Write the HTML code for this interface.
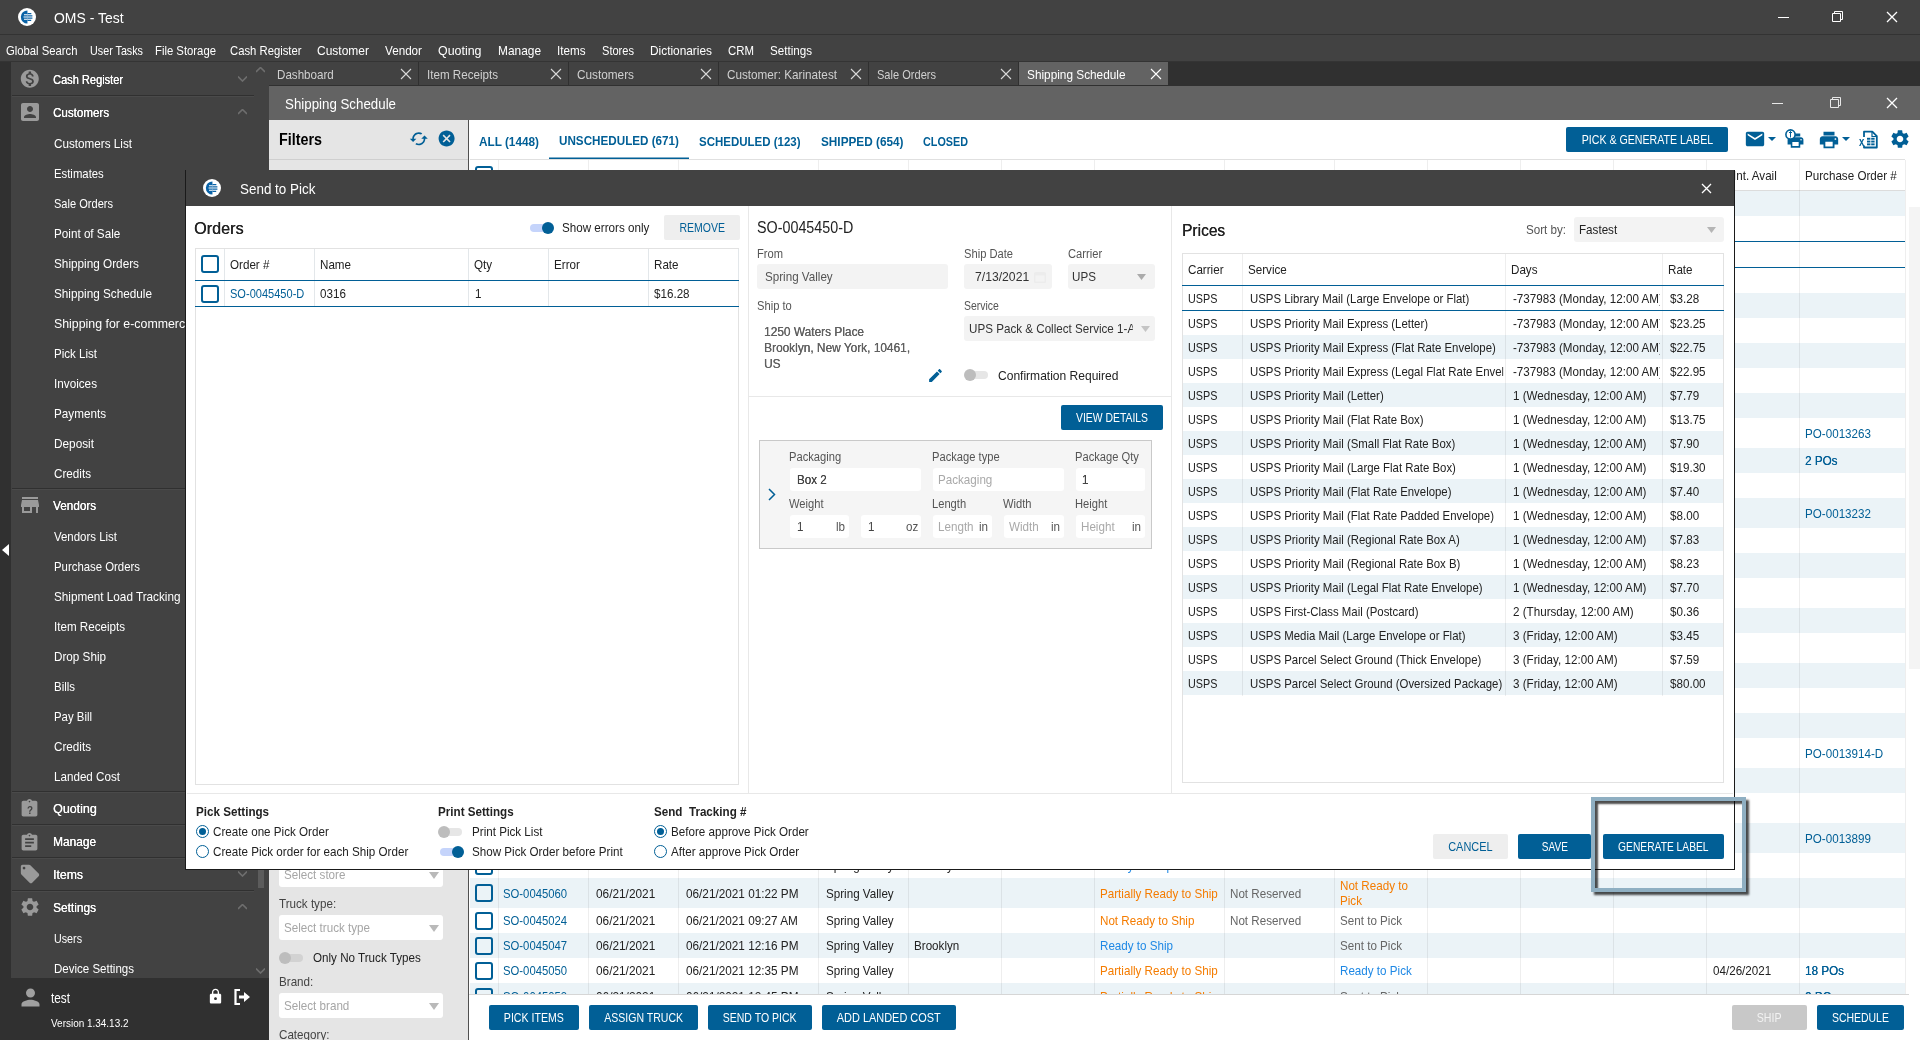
<!DOCTYPE html>
<html lang="en"><head><meta charset="utf-8"><title>OMS - Test</title>
<style>
html,body{margin:0;padding:0}
body{width:1920px;height:1040px;position:relative;overflow:hidden;background:#fff;font-family:"Liberation Sans",sans-serif;font-size:13px;color:#222}
.a,.t,.b{position:absolute;box-sizing:content-box}
.t{white-space:nowrap;transform:scaleX(.895);transform-origin:0 50%}
.b{text-align:center;white-space:nowrap;border-radius:2px}
.b span{display:inline-block;transform:scaleX(.825)}
.clip{overflow:hidden}
#r{position:absolute;left:0;top:0;width:1920px;height:1040px;will-change:transform}
</style></head><body><div id="r">

<div class="a" style="left:0px;top:0px;width:1920px;height:62px;background:#424242"></div>
<div class="a" style="left:0px;top:34px;width:1920px;height:1px;background:#333"></div>
<svg class="a" style="left:18px;top:8px" width="18" height="18" viewBox="0 0 24 24"><circle cx="12" cy="12" r="12" fill="#fff"/><path d="M12.6 3.2a8.8 8.8 0 1 0 0 17.6V3.2z" fill="#0a63a7"/><path d="M12.6 7.4h5.2M12.6 10.4h6.6M12.6 13.4h6.6M12.6 16.4h5" stroke="#0a63a7" stroke-width="1.6" fill="none"/><path d="M8 9h4.6M7.4 12h5.2M8 15h4.6" stroke="#fff" stroke-width="1.4" fill="none"/></svg>
<div class="t" style="left:54px;top:7px;font-size:15px;line-height:21px;color:#fff;transform:scaleX(0.93);">OMS - Test</div>
<div class="a" style="left:1778px;top:17px;width:11px;height:1px;background:#fff"></div>
<svg class="a" style="left:1832px;top:11px" width="12" height="12" viewBox="0 0 12 12"><path d="M0.5 2.5h8v8h-8zM2.5 2.5v-2h8v8h-2" stroke="#fff" stroke-width="1" fill="none"/></svg>
<svg class="a" style="left:1886px;top:11px" width="12" height="12"><path d="M1 1L11 11M11 1L1 11" stroke="#fff" stroke-width="1.3" fill="none"/></svg>
<div class="t" style="left:6px;top:41px;font-size:13px;line-height:19px;color:#fff;transform:scaleX(0.8678);">Global Search</div>
<div class="t" style="left:90px;top:41px;font-size:13px;line-height:19px;color:#fff;transform:scaleX(0.8273);">User Tasks</div>
<div class="t" style="left:155px;top:41px;font-size:13px;line-height:19px;color:#fff;transform:scaleX(0.8703);">File Storage</div>
<div class="t" style="left:230px;top:41px;font-size:13px;line-height:19px;color:#fff;transform:scaleX(0.868);">Cash Register</div>
<div class="t" style="left:317px;top:41px;font-size:13px;line-height:19px;color:#fff;transform:scaleX(0.9227);">Customer</div>
<div class="t" style="left:385px;top:41px;font-size:13px;line-height:19px;color:#fff;transform:scaleX(0.898);">Vendor</div>
<div class="t" style="left:438px;top:41px;font-size:13px;line-height:19px;color:#fff;transform:scaleX(0.9551);">Quoting</div>
<div class="t" style="left:498px;top:41px;font-size:13px;line-height:19px;color:#fff;transform:scaleX(0.9152);">Manage</div>
<div class="t" style="left:557px;top:41px;font-size:13px;line-height:19px;color:#fff;transform:scaleX(0.8963);">Items</div>
<div class="t" style="left:602px;top:41px;font-size:13px;line-height:19px;color:#fff;transform:scaleX(0.8516);">Stores</div>
<div class="t" style="left:650px;top:41px;font-size:13px;line-height:19px;color:#fff;transform:scaleX(0.9128);">Dictionaries</div>
<div class="t" style="left:728px;top:41px;font-size:13px;line-height:19px;color:#fff;transform:scaleX(0.8781);">CRM</div>
<div class="t" style="left:770px;top:41px;font-size:13px;line-height:19px;color:#fff;transform:scaleX(0.8939);">Settings</div>
<div class="a" style="left:0px;top:61px;width:1920px;height:1px;background:#343434"></div>
<div class="a" style="left:0px;top:62px;width:1920px;height:24px;background:#303030"></div>
<div class="a" style="left:269px;top:62px;width:149px;height:23px;background:#424242"></div>
<div class="t" style="left:277px;top:65px;font-size:13px;line-height:19px;color:#d0d0d0;transform:scaleX(0.8922);">Dashboard</div>
<svg class="a" style="left:400px;top:68px" width="12" height="12"><path d="M1 1L11 11M11 1L1 11" stroke="#d8d8d8" stroke-width="1.1" fill="none"/></svg>
<div class="a" style="left:419px;top:62px;width:149px;height:23px;background:#424242"></div>
<div class="t" style="left:427px;top:65px;font-size:13px;line-height:19px;color:#d0d0d0;transform:scaleX(0.8933);">Item Receipts</div>
<svg class="a" style="left:550px;top:68px" width="12" height="12"><path d="M1 1L11 11M11 1L1 11" stroke="#d8d8d8" stroke-width="1.1" fill="none"/></svg>
<div class="a" style="left:569px;top:62px;width:149px;height:23px;background:#424242"></div>
<div class="t" style="left:577px;top:65px;font-size:13px;line-height:19px;color:#d0d0d0;transform:scaleX(0.9068);">Customers</div>
<svg class="a" style="left:700px;top:68px" width="12" height="12"><path d="M1 1L11 11M11 1L1 11" stroke="#d8d8d8" stroke-width="1.1" fill="none"/></svg>
<div class="a" style="left:719px;top:62px;width:149px;height:23px;background:#424242"></div>
<div class="t" style="left:727px;top:65px;font-size:13px;line-height:19px;color:#d0d0d0;transform:scaleX(0.9008);">Customer: Karinatest</div>
<svg class="a" style="left:850px;top:68px" width="12" height="12"><path d="M1 1L11 11M11 1L1 11" stroke="#d8d8d8" stroke-width="1.1" fill="none"/></svg>
<div class="a" style="left:869px;top:62px;width:149px;height:23px;background:#424242"></div>
<div class="t" style="left:877px;top:65px;font-size:13px;line-height:19px;color:#d0d0d0;transform:scaleX(0.8505);">Sale Orders</div>
<svg class="a" style="left:1000px;top:68px" width="12" height="12"><path d="M1 1L11 11M11 1L1 11" stroke="#d8d8d8" stroke-width="1.1" fill="none"/></svg>
<div class="a" style="left:1019px;top:62px;width:149px;height:23px;background:#636363"></div>
<div class="t" style="left:1027px;top:65px;font-size:13px;line-height:19px;color:#fff;transform:scaleX(0.9085);">Shipping Schedule</div>
<svg class="a" style="left:1150px;top:68px" width="12" height="12"><path d="M1 1L11 11M11 1L1 11" stroke="#fff" stroke-width="1.1" fill="none"/></svg>
<div class="a" style="left:0px;top:62px;width:11px;height:978px;background:#303030"></div>
<svg class="a" style="left:2px;top:544px" width="7" height="12"><path d="M7 0v12L0 6z" fill="#fff"/></svg>
<div class="a" style="left:11px;top:62px;width:258px;height:916px;background:#424242"></div>
<div class="a" style="left:11px;top:978px;width:258px;height:62px;background:#303030"></div>
<svg class="a" style="left:18.7px;top:68.2px" width="21.6" height="21.6" viewBox="0 0 24 24"><path d="M12 2C6.48 2 2 6.48 2 12s4.48 10 10 10 10-4.48 10-10S17.52 2 12 2zm1.41 16.09V20h-2.67v-1.93c-1.71-.36-3.16-1.46-3.27-3.4h1.96c.1 1.05.82 1.87 2.65 1.87 1.96 0 2.4-.98 2.4-1.59 0-.83-.44-1.61-2.67-2.14-2.48-.6-4.18-1.62-4.18-3.67 0-1.72 1.39-2.84 3.11-3.21V4h2.67v1.95c1.86.45 2.79 1.86 2.85 3.39H14.3c-.05-1.11-.64-1.87-2.22-1.87-1.5 0-2.4.68-2.4 1.64 0 .84.65 1.39 2.67 1.91s4.18 1.39 4.18 3.91c-.01 1.83-1.38 2.83-3.12 3.16z" fill="#9a9a9a" /></svg>
<div class="t" style="left:53px;top:69.5px;font-size:13px;line-height:19px;color:#fff;transform:scaleX(0.8498);text-shadow:0.2px 0 0 #fff">Cash Register</div>
<svg class="a" style="left:238.0px;top:76px" width="9" height="6"><path d="M0 0.5L4.5 5L9 0.5" stroke="#6e6e6e" stroke-width="1.6" fill="none"/></svg>
<div class="a" style="left:12px;top:95px;width:242px;height:1px;background:#303030"></div>
<div class="a" style="left:12px;top:96px;width:242px;height:1px;background:#4a4a4a"></div>
<svg class="a" style="left:17.5px;top:100.0px" width="24" height="24" viewBox="0 0 24 24"><path d="M3 5v14c0 1.1.89 2 2 2h14c1.1 0 2-.9 2-2V5c0-1.1-.9-2-2-2H5c-1.11 0-2 .9-2 2zm12 4c0 1.66-1.34 3-3 3s-3-1.34-3-3 1.34-3 3-3 3 1.34 3 3zm-9 8c0-2 4-3.1 6-3.1s6 1.1 6 3.1v1H6v-1z" fill="#9a9a9a" /></svg>
<div class="t" style="left:53px;top:102.5px;font-size:13px;line-height:19px;color:#fff;transform:scaleX(0.8909);text-shadow:0.2px 0 0 #fff">Customers</div>
<svg class="a" style="left:238.0px;top:109px" width="9" height="6"><path d="M0 5L4.5 0.5L9 5" stroke="#6e6e6e" stroke-width="1.6" fill="none"/></svg>
<div class="t" style="left:54px;top:134px;font-size:13px;line-height:19px;color:#fff;transform:scaleX(0.8996);">Customers List</div>
<div class="t" style="left:54px;top:164px;font-size:13px;line-height:19px;color:#fff;transform:scaleX(0.8716);">Estimates</div>
<div class="t" style="left:54px;top:194px;font-size:13px;line-height:19px;color:#fff;transform:scaleX(0.8505);">Sale Orders</div>
<div class="t" style="left:54px;top:224px;font-size:13px;line-height:19px;color:#fff;transform:scaleX(0.8987);">Point of Sale</div>
<div class="t" style="left:54px;top:254px;font-size:13px;line-height:19px;color:#fff;transform:scaleX(0.9047);">Shipping Orders</div>
<div class="t" style="left:54px;top:284px;font-size:13px;line-height:19px;color:#fff;transform:scaleX(0.9039);">Shipping Schedule</div>
<div class="t" style="left:54px;top:314px;font-size:13px;line-height:19px;color:#fff;transform:scaleX(0.9502);">Shipping for e-commerce</div>
<div class="t" style="left:54px;top:344px;font-size:13px;line-height:19px;color:#fff;transform:scaleX(0.8883);">Pick List</div>
<div class="t" style="left:54px;top:374px;font-size:13px;line-height:19px;color:#fff;transform:scaleX(0.9014);">Invoices</div>
<div class="t" style="left:54px;top:404px;font-size:13px;line-height:19px;color:#fff;transform:scaleX(0.8995);">Payments</div>
<div class="t" style="left:54px;top:434px;font-size:13px;line-height:19px;color:#fff;transform:scaleX(0.9075);">Deposit</div>
<div class="t" style="left:54px;top:464px;font-size:13px;line-height:19px;color:#fff;transform:scaleX(0.8983);">Credits</div>
<div class="a" style="left:12px;top:488px;width:242px;height:1px;background:#303030"></div>
<div class="a" style="left:12px;top:489px;width:242px;height:1px;background:#4a4a4a"></div>
<svg class="a" style="left:17.5px;top:493.0px" width="24" height="24" viewBox="0 0 24 24"><path d="M20 4H4v2h16V4zm1 10v-2l-1-5H4l-1 5v2h1v6h10v-6h4v6h2v-6h1zm-9 4H6v-4h6v4z" fill="#9a9a9a" /></svg>
<div class="t" style="left:53px;top:495.5px;font-size:13px;line-height:19px;color:#fff;transform:scaleX(0.9014);text-shadow:0.2px 0 0 #fff">Vendors</div>
<div class="t" style="left:54px;top:527px;font-size:13px;line-height:19px;color:#fff;transform:scaleX(0.8805);">Vendors List</div>
<div class="t" style="left:54px;top:557px;font-size:13px;line-height:19px;color:#fff;transform:scaleX(0.8752);">Purchase Orders</div>
<div class="t" style="left:54px;top:587px;font-size:13px;line-height:19px;color:#fff;transform:scaleX(0.9023);">Shipment Load Tracking</div>
<div class="t" style="left:54px;top:617px;font-size:13px;line-height:19px;color:#fff;transform:scaleX(0.8933);">Item Receipts</div>
<div class="t" style="left:54px;top:647px;font-size:13px;line-height:19px;color:#fff;transform:scaleX(0.8995);">Drop Ship</div>
<div class="t" style="left:54px;top:677px;font-size:13px;line-height:19px;color:#fff;transform:scaleX(0.8807);">Bills</div>
<div class="t" style="left:54px;top:707px;font-size:13px;line-height:19px;color:#fff;transform:scaleX(0.8764);">Pay Bill</div>
<div class="t" style="left:54px;top:737px;font-size:13px;line-height:19px;color:#fff;transform:scaleX(0.8983);">Credits</div>
<div class="t" style="left:54px;top:767px;font-size:13px;line-height:19px;color:#fff;transform:scaleX(0.8951);">Landed Cost</div>
<div class="a" style="left:12px;top:791px;width:242px;height:1px;background:#303030"></div>
<div class="a" style="left:12px;top:792px;width:242px;height:1px;background:#4a4a4a"></div>
<svg class="a" style="left:19px;top:798px" width="21" height="21" viewBox="0 0 24 24"><path d="M19 3h-4.18C14.4 1.84 13.3 1 12 1c-1.3 0-2.4.84-2.82 2H5c-1.1 0-2 .9-2 2v14c0 1.1.9 2 2 2h14c1.1 0 2-.9 2-2V5c0-1.1-.9-2-2-2zm-7 0c.55 0 1 .45 1 1s-.45 1-1 1-1-.45-1-1 .45-1 1-1z" fill="#9a9a9a" /></svg>
<div class="t" style="left:26.5px;top:801.5px;font-size:11px;line-height:17px;color:#424242;font-weight:700;">?</div>
<div class="t" style="left:53px;top:798.5px;font-size:13px;line-height:19px;color:#fff;transform:scaleX(0.9605);text-shadow:0.2px 0 0 #fff">Quoting</div>
<div class="a" style="left:12px;top:824px;width:242px;height:1px;background:#303030"></div>
<div class="a" style="left:12px;top:825px;width:242px;height:1px;background:#4a4a4a"></div>
<svg class="a" style="left:19.0px;top:831.5px" width="21" height="21" viewBox="0 0 24 24"><path d="M19 3h-4.18C14.4 1.84 13.3 1 12 1c-1.3 0-2.4.84-2.82 2H5c-1.1 0-2 .9-2 2v14c0 1.1.9 2 2 2h14c1.1 0 2-.9 2-2V5c0-1.1-.9-2-2-2zm-7 0c.55 0 1 .45 1 1s-.45 1-1 1-1-.45-1-1 .45-1 1-1zm2 14H7v-2h7v2zm3-4H7v-2h10v2zm0-4H7V7h10v2z" fill="#9a9a9a" /></svg>
<div class="t" style="left:53px;top:831.5px;font-size:13px;line-height:19px;color:#fff;transform:scaleX(0.9152);text-shadow:0.2px 0 0 #fff">Manage</div>
<div class="a" style="left:12px;top:857px;width:242px;height:1px;background:#303030"></div>
<div class="a" style="left:12px;top:858px;width:242px;height:1px;background:#4a4a4a"></div>
<svg class="a" style="left:18.5px;top:863.0px" width="22" height="22" viewBox="0 0 24 24"><path d="M21.41 11.58l-9-9C12.05 2.22 11.55 2 11 2H4c-1.1 0-2 .9-2 2v7c0 .55.22 1.05.59 1.42l9 9c.36.36.86.58 1.41.58.55 0 1.05-.22 1.41-.59l7-7c.37-.36.59-.86.59-1.41 0-.55-.23-1.06-.59-1.42zM5.5 7C4.67 7 4 6.33 4 5.5S4.67 4 5.5 4 7 4.67 7 5.5 6.33 7 5.5 7z" fill="#9a9a9a" /></svg>
<div class="t" style="left:53px;top:864.5px;font-size:13px;line-height:19px;color:#fff;transform:scaleX(0.9435);text-shadow:0.2px 0 0 #fff">Items</div>
<svg class="a" style="left:238.0px;top:871px" width="9" height="6"><path d="M0 0.5L4.5 5L9 0.5" stroke="#6e6e6e" stroke-width="1.6" fill="none"/></svg>
<div class="a" style="left:12px;top:890px;width:242px;height:1px;background:#303030"></div>
<div class="a" style="left:12px;top:891px;width:242px;height:1px;background:#4a4a4a"></div>
<svg class="a" style="left:18.5px;top:896.0px" width="22" height="22" viewBox="0 0 24 24"><path d="M19.14 12.94c.04-.3.06-.61.06-.94 0-.32-.02-.64-.07-.94l2.03-1.58c.18-.14.23-.41.12-.61l-1.92-3.32c-.12-.22-.37-.29-.59-.22l-2.39.96c-.5-.38-1.03-.7-1.62-.94l-.36-2.54c-.04-.24-.24-.41-.48-.41h-3.84c-.24 0-.43.17-.47.41l-.36 2.54c-.59.24-1.13.57-1.62.94l-2.39-.96c-.22-.08-.47 0-.59.22L2.74 8.87c-.12.21-.08.47.12.61l2.03 1.58c-.05.3-.09.63-.09.94s.02.64.07.94l-2.03 1.58c-.18.14-.23.41-.12.61l1.92 3.32c.12.22.37.29.59.22l2.39-.96c.5.38 1.03.7 1.62.94l.36 2.54c.05.24.24.41.48.41h3.84c.24 0 .44-.17.47-.41l.36-2.54c.59-.24 1.13-.56 1.62-.94l2.39.96c.22.08.47 0 .59-.22l1.92-3.32c.12-.22.07-.47-.12-.61l-2.01-1.58zM12 15.6c-1.98 0-3.6-1.62-3.6-3.6s1.62-3.6 3.6-3.6 3.6 1.62 3.6 3.6-1.62 3.6-3.6 3.6z" fill="#9a9a9a" /></svg>
<div class="t" style="left:53px;top:897.5px;font-size:13px;line-height:19px;color:#fff;transform:scaleX(0.9152);text-shadow:0.2px 0 0 #fff">Settings</div>
<svg class="a" style="left:238.0px;top:904px" width="9" height="6"><path d="M0 5L4.5 0.5L9 5" stroke="#6e6e6e" stroke-width="1.6" fill="none"/></svg>
<div class="t" style="left:54px;top:929px;font-size:13px;line-height:19px;color:#fff;transform:scaleX(0.8247);">Users</div>
<div class="t" style="left:54px;top:959px;font-size:13px;line-height:19px;color:#fff;transform:scaleX(0.8857);">Device Settings</div>
<svg class="a" style="left:256.0px;top:67px" width="9" height="6"><path d="M0 5L4.5 0.5L9 5" stroke="#6e6e6e" stroke-width="1.6" fill="none"/></svg>
<svg class="a" style="left:256.0px;top:968px" width="9" height="6"><path d="M0 0.5L4.5 5L9 0.5" stroke="#6e6e6e" stroke-width="1.6" fill="none"/></svg>
<div class="a" style="left:258px;top:800px;width:6px;height:88px;background:#5c5c5c"></div>
<svg class="a" style="left:16.5px;top:983.5px" width="27" height="27" viewBox="0 0 24 24"><path d="M12 12c2.21 0 4-1.79 4-4s-1.79-4-4-4-4 1.79-4 4 1.79 4 4 4zm0 2c-2.67 0-8 1.34-8 4v2h16v-2c0-2.66-5.33-4-8-4z" fill="#a0a0a0" /></svg>
<div class="t" style="left:51px;top:987.5px;font-size:14px;line-height:20px;color:#fff;transform:scaleX(0.8415);">test</div>
<svg class="a" style="left:207px;top:988px" width="17" height="17" viewBox="0 0 24 24"><path d="M18 8h-1V6c0-2.76-2.24-5-5-5S7 3.24 7 6v2H6c-1.1 0-2 .9-2 2v10c0 1.1.9 2 2 2h12c1.1 0 2-.9 2-2V10c0-1.1-.9-2-2-2zm-6 9c-1.1 0-2-.9-2-2s.9-2 2-2 2 .9 2 2-.9 2-2 2zm3.1-9H8.9V6c0-1.71 1.39-3.1 3.1-3.1 1.71 0 3.1 1.39 3.1 3.1v2z" fill="#fff" /></svg>
<svg class="a" style="left:233px;top:988px" width="18" height="18" viewBox="0 0 18 18"><path d="M7 2H2.5v14H7" stroke="#fff" stroke-width="2.2" fill="none"/><path d="M6 7.5h5V4l6 5-6 5v-3.500H6z" fill="#fff"/></svg>
<div class="t" style="left:51px;top:1015px;font-size:11px;line-height:17px;color:#fff;transform:scaleX(0.9051);">Version 1.34.13.2</div>
<div class="a" style="left:269px;top:86px;width:1651px;height:34px;background:#636363"></div>
<div class="t" style="left:285px;top:92.5px;font-size:15px;line-height:21px;color:#fff;transform:scaleX(0.8872);">Shipping Schedule</div>
<div class="a" style="left:1772px;top:103px;width:11px;height:1px;background:#e8e8e8"></div>
<svg class="a" style="left:1830px;top:97px" width="12" height="12" viewBox="0 0 12 12"><path d="M0.5 2.500h8v8h-8zM2.5 2.500v-2h8v8h-2" stroke="#e8e8e8" stroke-width="1" fill="none"/></svg>
<svg class="a" style="left:1886px;top:97px" width="12" height="12"><path d="M1 1L11 11M11 1L1 11" stroke="#fff" stroke-width="1.3" fill="none"/></svg>
<div class="a" style="left:269px;top:120px;width:199px;height:920px;background:#e5e5e5"></div>
<div class="a" style="left:468px;top:120px;width:1px;height:920px;background:#505050"></div>
<div class="a" style="left:269px;top:159px;width:199px;height:1px;background:#cfcfcf"></div>
<div class="t" style="left:279px;top:129px;font-size:16px;line-height:22px;color:#000;font-weight:700;">Filters</div>
<svg class="a" style="left:409.2px;top:129.2px" width="19.6" height="19.6" viewBox="0 0 24 24"><path d="M19 8l-4 4h3c0 3.31-2.69 6-6 6-1.01 0-1.97-.25-2.8-.7l-1.46 1.46C8.97 19.54 10.43 20 12 20c4.42 0 8-3.58 8-8h3l-4-4zM6 12c0-3.31 2.69-6 6-6 1.01 0 1.97.25 2.8.7l1.46-1.46C15.03 4.46 13.57 4 12 4c-4.42 0-8 3.58-8 8H1l4 4 4-4H6z" fill="#015f96" /></svg>
<svg class="a" style="left:437.4px;top:129.4px" width="19.2" height="19.2" viewBox="0 0 24 24"><path d="M12 2C6.47 2 2 6.47 2 12s4.47 10 10 10 10-4.47 10-10S17.53 2 12 2zm5 13.59L15.59 17 12 13.41 8.41 17 7 15.59 10.59 12 7 8.41 8.41 7 12 10.59 15.59 7 17 8.41 13.41 12 17 15.59z" fill="#015f96" /></svg>
<div class="a" style="left:279px;top:862px;width:164px;height:25px;background:#fff;border-radius:3px"></div>
<div class="t" style="left:284px;top:865px;font-size:13px;line-height:19px;color:#a6a6a6;">Select store</div>
<svg class="a" style="left:429px;top:872px" width="10" height="7"><path d="M0 0H10L5.0 7z" fill="#b9b9b9"/></svg>
<div class="t" style="left:279px;top:893.7px;font-size:13px;line-height:19px;color:#444;">Truck type:</div>
<div class="a" style="left:279px;top:915px;width:164px;height:25px;background:#fff;border-radius:3px"></div>
<div class="t" style="left:284px;top:918px;font-size:13px;line-height:19px;color:#a6a6a6;">Select truck type</div>
<svg class="a" style="left:429px;top:925px" width="10" height="7"><path d="M0 0H10L5.0 7z" fill="#b9b9b9"/></svg>
<div class="a" style="left:281px;top:954px;width:22px;height:8px;background:#d2d2d2;border-radius:4px"></div>
<div class="a" style="left:279px;top:952px;width:12px;height:12px;background:#bdbdbd;border-radius:6px"></div>
<div class="t" style="left:313px;top:947.7px;font-size:13px;line-height:19px;color:#222;">Only No Truck Types</div>
<div class="t" style="left:279px;top:971.7px;font-size:13px;line-height:19px;color:#444;">Brand:</div>
<div class="a" style="left:279px;top:993px;width:164px;height:25px;background:#fff;border-radius:3px"></div>
<div class="t" style="left:284px;top:996px;font-size:13px;line-height:19px;color:#a6a6a6;">Select brand</div>
<svg class="a" style="left:429px;top:1003px" width="10" height="7"><path d="M0 0H10L5.0 7z" fill="#b9b9b9"/></svg>
<div class="t" style="left:279px;top:1024.7px;font-size:13px;line-height:19px;color:#444;">Category:</div>
<div class="a" style="left:469px;top:120px;width:1451px;height:920px;background:#fff"></div>
<div class="t" style="left:479px;top:132px;font-size:13px;line-height:19px;color:#015f96;font-weight:700;transform:scaleX(0.9059);">ALL (1448)</div>
<div class="t" style="left:559px;top:131px;font-size:13px;line-height:19px;color:#015f96;font-weight:700;transform:scaleX(0.8979);">UNSCHEDULED (671)</div>
<div class="t" style="left:699px;top:132px;font-size:13px;line-height:19px;color:#015f96;font-weight:700;transform:scaleX(0.8837);">SCHEDULED (123)</div>
<div class="t" style="left:820.5px;top:132px;font-size:13px;line-height:19px;color:#015f96;font-weight:700;transform:scaleX(0.9061);">SHIPPED (654)</div>
<div class="t" style="left:923px;top:132px;font-size:13px;line-height:19px;color:#015f96;font-weight:700;transform:scaleX(0.8307);">CLOSED</div>
<div class="a" style="left:549px;top:158px;width:140px;height:2px;background:#015f96"></div>
<div class="a" style="left:549px;top:157px;width:140px;height:1px;background:rgba(1,95,150,.5)"></div>
<div class="a b" style="left:1566px;top:127px;width:162px;height:25px;line-height:25px;font-size:13px;background:#015f96;color:#fff;"><span style="transform:scaleX(0.8174)">PICK &amp; GENERATE LABEL</span></div>
<svg class="a" style="left:1744px;top:128px" width="22" height="22" viewBox="0 0 24 24"><path d="M20 4H4c-1.1 0-1.99.9-1.99 2L2 18c0 1.1.9 2 2 2h16c1.1 0 2-.9 2-2V6c0-1.1-.9-2-2-2zm0 4l-8 5-8-5V6l8 5 8-5v2z" fill="#015f96" /></svg>
<svg class="a" style="left:1768px;top:137px" width="8" height="4"><path d="M0 0H8L4.0 4z" fill="#015f96"/></svg>
<svg class="a" style="left:1785.8px;top:131px" width="19" height="19" viewBox="0 0 24 24"><path d="M19 8H5c-1.66 0-3 1.34-3 3v6h4v4h12v-4h4v-6c0-1.66-1.34-3-3-3zm-3 11H8v-5h8v5zm3-7c-.55 0-1-.45-1-1s.45-1 1-1 1 .45 1 1-.45 1-1 1zm-1-9H6v4h12V3z" fill="#015f96" /></svg>
<svg class="a" style="left:1784.5px;top:128.5px" width="11" height="11" viewBox="0 0 11 11"><circle cx="5.5" cy="5.5" r="4.6" fill="#fff" stroke="#015f96" stroke-width="1.6"/><path d="M5.5 2.5v6M4 4l1.500-1.500L7 4" stroke="#015f96" stroke-width="1" fill="none"/></svg>
<svg class="a" style="left:1818px;top:129px" width="22" height="22" viewBox="0 0 24 24"><path d="M19 8H5c-1.66 0-3 1.34-3 3v6h4v4h12v-4h4v-6c0-1.66-1.34-3-3-3zm-3 11H8v-5h8v5zm3-7c-.55 0-1-.45-1-1s.45-1 1-1 1 .45 1 1-.45 1-1 1zm-1-9H6v4h12V3z" fill="#015f96" /></svg>
<svg class="a" style="left:1842px;top:137px" width="8" height="4"><path d="M0 0H8L4.0 4z" fill="#015f96"/></svg>
<svg class="a" style="left:1858px;top:130px" width="20" height="19" viewBox="0 0 20 19"><path d="M6 1.700h8.300l4.500 4.500v11.300H6z" fill="#fff" stroke="#015f96" stroke-width="1.800" stroke-linejoin="round"/><path d="M14 1.700v4.800h4.800" fill="none" stroke="#015f96" stroke-width="1.200"/><rect x="0" y="7" width="7.600" height="8.500" fill="#fff"/><rect x="9" y="7.8" width="3.400" height="1.900" fill="#015f96"/><rect x="13.2" y="7.8" width="3.400" height="1.900" fill="#015f96"/><rect x="9" y="10.6" width="3.400" height="1.900" fill="#015f96"/><rect x="13.2" y="10.6" width="3.400" height="1.900" fill="#015f96"/><rect x="9" y="13.4" width="3.400" height="1.900" fill="#015f96"/><rect x="13.2" y="13.4" width="3.400" height="1.900" fill="#015f96"/></svg>
<div class="t" style="left:1859px;top:132.5px;font-size:12px;line-height:18px;color:#015f96;font-weight:700;transform:scaleX(0.8);">x</div>
<svg class="a" style="left:1889px;top:128px" width="22" height="22" viewBox="0 0 24 24"><path d="M19.14 12.94c.04-.3.06-.61.06-.94 0-.32-.02-.64-.07-.94l2.03-1.58c.18-.14.23-.41.12-.61l-1.92-3.32c-.12-.22-.37-.29-.59-.22l-2.39.96c-.5-.38-1.03-.7-1.62-.94l-.36-2.54c-.04-.24-.24-.41-.48-.41h-3.84c-.24 0-.43.17-.47.41l-.36 2.54c-.59.24-1.13.57-1.62.94l-2.39-.96c-.22-.08-.47 0-.59.22L2.74 8.87c-.12.21-.08.47.12.61l2.03 1.58c-.05.3-.09.63-.09.94s.02.64.07.94l-2.03 1.58c-.18.14-.23.41-.12.61l1.92 3.32c.12.22.37.29.59.22l2.39-.96c.5.38 1.03.7 1.62.94l.36 2.54c.05.24.24.41.48.41h3.84c.24 0 .44-.17.47-.41l.36-2.54c.59-.24 1.13-.56 1.62-.94l2.39.96c.22.08.47 0 .59-.22l1.92-3.32c.12-.22.07-.47-.12-.61l-2.01-1.58zM12 15.6c-1.98 0-3.6-1.62-3.6-3.6s1.62-3.6 3.6-3.6 3.6 1.62 3.6 3.6-1.62 3.6-3.6 3.6z" fill="#015f96" /></svg>
<div class="a" style="left:470px;top:159px;width:1435px;height:1px;background:#e0e0e0"></div>
<div class="a" style="left:470px;top:190px;width:1435px;height:26px;background:#ebf3f7"></div>
<div class="a" style="left:470px;top:241px;width:1435px;height:1px;background:#015f96"></div>
<div class="a" style="left:470px;top:267px;width:1435px;height:1px;background:#015f96"></div>
<div class="a" style="left:470px;top:293px;width:1435px;height:25px;background:#ebf3f7"></div>
<div class="a" style="left:470px;top:343px;width:1435px;height:25px;background:#ebf3f7"></div>
<div class="a" style="left:470px;top:393px;width:1435px;height:25px;background:#ebf3f7"></div>
<div class="a" style="left:470px;top:448px;width:1435px;height:25px;background:#ebf3f7"></div>
<div class="a" style="left:470px;top:498px;width:1435px;height:30px;background:#ebf3f7"></div>
<div class="a" style="left:470px;top:553px;width:1435px;height:25px;background:#ebf3f7"></div>
<div class="a" style="left:470px;top:608px;width:1435px;height:25px;background:#ebf3f7"></div>
<div class="a" style="left:470px;top:663px;width:1435px;height:25px;background:#ebf3f7"></div>
<div class="a" style="left:470px;top:713px;width:1435px;height:25px;background:#ebf3f7"></div>
<div class="a" style="left:470px;top:768px;width:1435px;height:25px;background:#ebf3f7"></div>
<div class="a" style="left:470px;top:823px;width:1435px;height:30px;background:#ebf3f7"></div>
<div class="a" style="left:470px;top:878px;width:1435px;height:30px;background:#ebf3f7"></div>
<div class="a" style="left:470px;top:933px;width:1435px;height:25px;background:#ebf3f7"></div>
<div class="a" style="left:470px;top:983px;width:1435px;height:12px;background:#ebf3f7"></div>
<div class="a" style="left:470px;top:190px;width:1435px;height:1px;background:#dcdcdc"></div>
<div class="a" style="left:498px;top:160px;width:1px;height:835px;background:rgba(0,0,0,0.065)"></div>
<div class="a" style="left:588px;top:160px;width:1px;height:835px;background:rgba(0,0,0,0.065)"></div>
<div class="a" style="left:678px;top:160px;width:1px;height:835px;background:rgba(0,0,0,0.065)"></div>
<div class="a" style="left:818px;top:160px;width:1px;height:835px;background:rgba(0,0,0,0.065)"></div>
<div class="a" style="left:908px;top:160px;width:1px;height:835px;background:rgba(0,0,0,0.065)"></div>
<div class="a" style="left:1001px;top:160px;width:1px;height:835px;background:rgba(0,0,0,0.065)"></div>
<div class="a" style="left:1094px;top:160px;width:1px;height:835px;background:rgba(0,0,0,0.065)"></div>
<div class="a" style="left:1224px;top:160px;width:1px;height:835px;background:rgba(0,0,0,0.065)"></div>
<div class="a" style="left:1334px;top:160px;width:1px;height:835px;background:rgba(0,0,0,0.065)"></div>
<div class="a" style="left:1427px;top:160px;width:1px;height:835px;background:rgba(0,0,0,0.065)"></div>
<div class="a" style="left:1520px;top:160px;width:1px;height:835px;background:rgba(0,0,0,0.065)"></div>
<div class="a" style="left:1613px;top:160px;width:1px;height:835px;background:rgba(0,0,0,0.065)"></div>
<div class="a" style="left:1706px;top:160px;width:1px;height:835px;background:rgba(0,0,0,0.065)"></div>
<div class="a" style="left:1799px;top:160px;width:1px;height:835px;background:rgba(0,0,0,0.065)"></div>
<div class="a" style="left:1905px;top:160px;width:1px;height:835px;background:rgba(0,0,0,0.065)"></div>
<div class="t" style="left:1732.5px;top:166px;font-size:13px;line-height:19px;color:#222;">Int. Avail</div>
<div class="t" style="left:1805px;top:166px;font-size:13px;line-height:19px;color:#222;">Purchase Order #</div>
<div class="a" style="left:475px;top:166px;width:14px;height:14px;border:2px solid #015f96;border-radius:3px;background:transparent"></div>
<div class="t" style="left:1805px;top:424px;font-size:13px;line-height:19px;color:#015f96;">PO-0013263</div>
<div class="t" style="left:1805px;top:451px;font-size:13px;line-height:19px;color:#015f96;text-shadow:0.4px 0 0 #015f96">2 POs</div>
<div class="t" style="left:1805px;top:504px;font-size:13px;line-height:19px;color:#015f96;">PO-0013232</div>
<div class="t" style="left:1805px;top:744px;font-size:13px;line-height:19px;color:#015f96;">PO-0013914-D</div>
<div class="t" style="left:1805px;top:829px;font-size:13px;line-height:19px;color:#015f96;">PO-0013899</div>
<div class="a clip" style="left:469px;top:160px;width:1436px;height:835px">
<div class="a" style="left:6px;top:696.5px;width:14px;height:14px;border:2px solid #015f96;border-radius:3px;background:transparent"></div>
<div class="t" style="left:34px;top:696px;font-size:13px;line-height:19px;color:#015f96;transform:scaleX(0.87);">SO-0045057</div>
<div class="t" style="left:127px;top:696px;font-size:13px;line-height:19px;color:#222;transform:scaleX(0.91);">06/21/2021</div>
<div class="t" style="left:217px;top:696px;font-size:13px;line-height:19px;color:#222;transform:scaleX(0.905);">06/21/2021 01:10 PM</div>
<div class="t" style="left:357px;top:696px;font-size:13px;line-height:19px;color:#222;">Spring Valley</div>
<div class="t" style="left:445px;top:696px;font-size:13px;line-height:19px;color:#222;">Brooklyn</div>
<div class="t" style="left:631px;top:696px;font-size:13px;line-height:19px;color:#1e88e5;">Ready to Ship</div>
<div class="a" style="left:6px;top:724.0px;width:14px;height:14px;border:2px solid #015f96;border-radius:3px;background:transparent"></div>
<div class="t" style="left:34px;top:724px;font-size:13px;line-height:19px;color:#015f96;transform:scaleX(0.87);">SO-0045060</div>
<div class="t" style="left:127px;top:724px;font-size:13px;line-height:19px;color:#222;transform:scaleX(0.91);">06/21/2021</div>
<div class="t" style="left:217px;top:724px;font-size:13px;line-height:19px;color:#222;transform:scaleX(0.905);">06/21/2021 01:22 PM</div>
<div class="t" style="left:357px;top:724px;font-size:13px;line-height:19px;color:#222;">Spring Valley</div>
<div class="t" style="left:631px;top:724px;font-size:13px;line-height:19px;color:#f57c00;">Partially Ready to Ship</div>
<div class="t" style="left:761px;top:724px;font-size:13px;line-height:19px;color:#666;">Not Reserved</div>
<div class="t" style="left:871px;top:717.5px;font-size:13px;line-height:15px;color:#f57c00;">Not Ready to<br>Pick</div>
<div class="a" style="left:6px;top:751.5px;width:14px;height:14px;border:2px solid #015f96;border-radius:3px;background:transparent"></div>
<div class="t" style="left:34px;top:751px;font-size:13px;line-height:19px;color:#015f96;transform:scaleX(0.87);">SO-0045024</div>
<div class="t" style="left:127px;top:751px;font-size:13px;line-height:19px;color:#222;transform:scaleX(0.91);">06/21/2021</div>
<div class="t" style="left:217px;top:751px;font-size:13px;line-height:19px;color:#222;transform:scaleX(0.905);">06/21/2021 09:27 AM</div>
<div class="t" style="left:357px;top:751px;font-size:13px;line-height:19px;color:#222;">Spring Valley</div>
<div class="t" style="left:631px;top:751px;font-size:13px;line-height:19px;color:#f57c00;">Not Ready to Ship</div>
<div class="t" style="left:761px;top:751px;font-size:13px;line-height:19px;color:#666;">Not Reserved</div>
<div class="t" style="left:871px;top:751px;font-size:13px;line-height:19px;color:#666;">Sent to Pick</div>
<div class="a" style="left:6px;top:776.5px;width:14px;height:14px;border:2px solid #015f96;border-radius:3px;background:transparent"></div>
<div class="t" style="left:34px;top:776px;font-size:13px;line-height:19px;color:#015f96;transform:scaleX(0.87);">SO-0045047</div>
<div class="t" style="left:127px;top:776px;font-size:13px;line-height:19px;color:#222;transform:scaleX(0.91);">06/21/2021</div>
<div class="t" style="left:217px;top:776px;font-size:13px;line-height:19px;color:#222;transform:scaleX(0.905);">06/21/2021 12:16 PM</div>
<div class="t" style="left:357px;top:776px;font-size:13px;line-height:19px;color:#222;">Spring Valley</div>
<div class="t" style="left:445px;top:776px;font-size:13px;line-height:19px;color:#222;">Brooklyn</div>
<div class="t" style="left:631px;top:776px;font-size:13px;line-height:19px;color:#1e88e5;">Ready to Ship</div>
<div class="t" style="left:871px;top:776px;font-size:13px;line-height:19px;color:#666;">Sent to Pick</div>
<div class="a" style="left:6px;top:801.5px;width:14px;height:14px;border:2px solid #015f96;border-radius:3px;background:transparent"></div>
<div class="t" style="left:34px;top:801px;font-size:13px;line-height:19px;color:#015f96;transform:scaleX(0.87);">SO-0045050</div>
<div class="t" style="left:127px;top:801px;font-size:13px;line-height:19px;color:#222;transform:scaleX(0.91);">06/21/2021</div>
<div class="t" style="left:217px;top:801px;font-size:13px;line-height:19px;color:#222;transform:scaleX(0.905);">06/21/2021 12:35 PM</div>
<div class="t" style="left:357px;top:801px;font-size:13px;line-height:19px;color:#222;">Spring Valley</div>
<div class="t" style="left:631px;top:801px;font-size:13px;line-height:19px;color:#f57c00;">Partially Ready to Ship</div>
<div class="t" style="left:871px;top:801px;font-size:13px;line-height:19px;color:#1e88e5;">Ready to Pick</div>
<div class="t" style="left:1244px;top:801px;font-size:13px;line-height:19px;color:#222;">04/26/2021</div>
<div class="t" style="left:1336px;top:801px;font-size:13px;line-height:19px;color:#015f96;text-shadow:0.4px 0 0 #015f96">18 POs</div>
<div class="a" style="left:6px;top:827.5px;width:14px;height:14px;border:2px solid #015f96;border-radius:3px;background:transparent"></div>
<div class="t" style="left:34px;top:827px;font-size:13px;line-height:19px;color:#015f96;transform:scaleX(0.87);">SO-0045053</div>
<div class="t" style="left:127px;top:827px;font-size:13px;line-height:19px;color:#222;transform:scaleX(0.91);">06/21/2021</div>
<div class="t" style="left:217px;top:827px;font-size:13px;line-height:19px;color:#222;transform:scaleX(0.905);">06/21/2021 12:45 PM</div>
<div class="t" style="left:357px;top:827px;font-size:13px;line-height:19px;color:#222;">Spring Valley</div>
<div class="t" style="left:631px;top:827px;font-size:13px;line-height:19px;color:#f57c00;">Partially Ready to Ship</div>
<div class="t" style="left:871px;top:827px;font-size:13px;line-height:19px;color:#666;">Sent to Pick</div>
<div class="t" style="left:1336px;top:827px;font-size:13px;line-height:19px;color:#015f96;text-shadow:0.4px 0 0 #015f96">9 POs</div>
</div>
<div class="a" style="left:469px;top:994px;width:1451px;height:1px;background:#d6d6d6"></div>
<div class="a" style="left:1909px;top:160px;width:11px;height:835px;background:#fff"></div>
<div class="a" style="left:1909px;top:207px;width:11px;height:462px;background:#f4f4f4"></div>
<div class="a b" style="left:489px;top:1005px;width:90px;height:25px;line-height:25px;font-size:13px;background:#015f96;color:#fff;"><span style="transform:scaleX(0.8142)">PICK ITEMS</span></div>
<div class="a b" style="left:589px;top:1005px;width:109px;height:25px;line-height:25px;font-size:13px;background:#015f96;color:#fff;"><span style="transform:scaleX(0.8095)">ASSIGN TRUCK</span></div>
<div class="a b" style="left:708px;top:1005px;width:104px;height:25px;line-height:25px;font-size:13px;background:#015f96;color:#fff;"><span style="transform:scaleX(0.8079)">SEND TO PICK</span></div>
<div class="a b" style="left:822px;top:1005px;width:134px;height:25px;line-height:25px;font-size:13px;background:#015f96;color:#fff;"><span style="transform:scaleX(0.8419)">ADD LANDED COST</span></div>
<div class="a b" style="left:1732px;top:1005px;width:75px;height:25px;line-height:25px;font-size:13px;background:#c8c8c8;color:#f2f2f2;"><span style="transform:scaleX(0.8173)">SHIP</span></div>
<div class="a b" style="left:1817px;top:1005px;width:87px;height:25px;line-height:25px;font-size:13px;background:#015f96;color:#fff;"><span style="transform:scaleX(0.8051)">SCHEDULE</span></div>
<div class="a" style="left:185px;top:170px;width:1550px;height:700px;background:#fff;box-shadow:0 0 0 1px #1a1a1a inset"></div>
<div class="a" style="left:185px;top:170px;width:1550px;height:36px;background:#424242"></div>
<svg class="a" style="left:203px;top:179px" width="18" height="18" viewBox="0 0 24 24"><circle cx="12" cy="12" r="12" fill="#fff"/><path d="M12.6 3.2a8.8 8.8 0 1 0 0 17.6V3.2z" fill="#0a63a7"/><path d="M12.6 7.4h5.2M12.6 10.4h6.6M12.6 13.4h6.6M12.6 16.4h5" stroke="#0a63a7" stroke-width="1.6" fill="none"/><path d="M8 9h4.6M7.4 12h5.2M8 15h4.6" stroke="#fff" stroke-width="1.4" fill="none"/></svg>
<div class="t" style="left:240px;top:178px;font-size:15px;line-height:21px;color:#fff;">Send to Pick</div>
<svg class="a" style="left:1700.5px;top:182.5px" width="11.0" height="11.0"><path d="M1 1L10.0 10.0M10.0 1L1 10.0" stroke="#fff" stroke-width="1.3" fill="none"/></svg>
<div class="t" style="left:194px;top:217.5px;font-size:16px;line-height:22px;color:#222;transform:scaleX(1.0121);text-shadow:0.3px 0 0 #222">Orders</div>
<div class="a" style="left:530px;top:223.5px;width:22px;height:8px;background:#c5d4fb;border-radius:4px"></div>
<div class="a" style="left:542px;top:221.5px;width:12px;height:12px;background:#015f96;border-radius:6px"></div>
<div class="t" style="left:562px;top:217.5px;font-size:13px;line-height:19px;color:#222;">Show errors only</div>
<div class="a b" style="left:664px;top:215px;width:76px;height:25px;line-height:25px;font-size:13px;background:#eeeeee;color:#015f96;"><span style="transform:scaleX(0.8075)">REMOVE</span></div>
<div class="a" style="left:195px;top:248px;width:544px;height:537px;border:1px solid #e2e2e2;box-sizing:border-box;background:#fff"></div>
<div class="a" style="left:224px;top:249px;width:1px;height:58px;background:#e3e7ea"></div>
<div class="a" style="left:314px;top:249px;width:1px;height:58px;background:#e3e7ea"></div>
<div class="a" style="left:468px;top:249px;width:1px;height:58px;background:#e3e7ea"></div>
<div class="a" style="left:548px;top:249px;width:1px;height:58px;background:#e3e7ea"></div>
<div class="a" style="left:648px;top:249px;width:1px;height:58px;background:#e3e7ea"></div>
<div class="a" style="left:738px;top:249px;width:1px;height:32px;background:#e3e7ea"></div>
<div class="a" style="left:195px;top:280px;width:544px;height:1px;background:#015f96"></div>
<div class="a" style="left:195px;top:306px;width:544px;height:1px;background:#015f96"></div>
<div class="a" style="left:201px;top:255px;width:14px;height:14px;border:2px solid #015f96;border-radius:3px;background:transparent"></div>
<div class="a" style="left:201px;top:285px;width:14px;height:14px;border:2px solid #015f96;border-radius:3px;background:transparent"></div>
<div class="t" style="left:230px;top:254.5px;font-size:13px;line-height:19px;color:#222;">Order #</div>
<div class="t" style="left:320px;top:254.5px;font-size:13px;line-height:19px;color:#222;">Name</div>
<div class="t" style="left:474px;top:254.5px;font-size:13px;line-height:19px;color:#222;">Qty</div>
<div class="t" style="left:554px;top:254.5px;font-size:13px;line-height:19px;color:#222;">Error</div>
<div class="t" style="left:654px;top:254.5px;font-size:13px;line-height:19px;color:#222;">Rate</div>
<div class="t" style="left:230px;top:283.5px;font-size:13px;line-height:19px;color:#015f96;transform:scaleX(0.85);">SO-0045450-D</div>
<div class="t" style="left:320px;top:283.5px;font-size:13px;line-height:19px;color:#222;">0316</div>
<div class="t" style="left:475px;top:283.5px;font-size:13px;line-height:19px;color:#222;">1</div>
<div class="t" style="left:654px;top:283.5px;font-size:13px;line-height:19px;color:#222;">$16.28</div>
<div class="a" style="left:748px;top:206px;width:1px;height:587px;background:#e8e8e8"></div>
<div class="a" style="left:1171px;top:206px;width:1px;height:587px;background:#e8e8e8"></div>
<div class="a" style="left:749px;top:396px;width:422px;height:1px;background:#e8e8e8"></div>
<div class="a" style="left:187px;top:793px;width:1546px;height:1px;background:#e8e8e8"></div>
<div class="t" style="left:757px;top:217px;font-size:16px;line-height:22px;color:#222;">SO-0045450-D</div>
<div class="t" style="left:757px;top:245px;font-size:12px;line-height:18px;color:#555;transform:scaleX(0.93);">From</div>
<div class="t" style="left:964px;top:245px;font-size:12px;line-height:18px;color:#555;transform:scaleX(0.93);">Ship Date</div>
<div class="t" style="left:1068px;top:245px;font-size:12px;line-height:18px;color:#555;transform:scaleX(0.93);">Carrier</div>
<div class="a" style="left:757px;top:264px;width:191px;height:25px;background:#f3f3f3;border-radius:3px"></div>
<div class="t" style="left:765px;top:266.5px;font-size:13px;line-height:19px;color:#555;">Spring Valley</div>
<div class="a" style="left:964px;top:264px;width:88px;height:25px;background:#f3f3f3;border-radius:3px"></div>
<div class="t" style="left:975px;top:266.5px;font-size:13px;line-height:19px;color:#333;transform:scaleX(0.937);">7/13/2021</div>
<svg class="a" style="left:1033px;top:270px" width="14" height="14" viewBox="0 0 14 14"><rect x="1" y="2" width="12" height="11" rx="1.500" fill="#ececec"/><rect x="2.500" y="5.500" width="9" height="6" fill="#f3f3f3"/></svg>
<div class="a" style="left:1068px;top:264px;width:87px;height:25px;background:#f3f3f3;border-radius:3px"></div>
<div class="t" style="left:1072px;top:266.5px;font-size:13px;line-height:19px;color:#333;">UPS</div>
<svg class="a" style="left:1137px;top:274px" width="9" height="6"><path d="M0 0H9L4.5 6z" fill="#ababab"/></svg>
<div class="t" style="left:757px;top:297px;font-size:12px;line-height:18px;color:#555;transform:scaleX(0.93);">Ship to</div>
<div class="t" style="left:964px;top:297px;font-size:12px;line-height:18px;color:#555;transform:scaleX(0.87);">Service</div>
<div class="a" style="left:964px;top:316px;width:191px;height:25px;background:#f3f3f3;border-radius:3px"></div>
<div class="t clip" style="left:969px;top:318.500px;width:183px;font-size:13px;line-height:19px;color:#333">UPS Pack &amp; Collect Service 1-Amber</div>
<svg class="a" style="left:1141px;top:326px" width="9" height="6"><path d="M0 0H9L4.5 6z" fill="#c4c4c4"/></svg>
<div class="t" style="left:764px;top:321.5px;font-size:13px;line-height:19px;color:#606060;transform:scaleX(0.914);text-shadow:0.3px 0 0 #606060">1250 Waters Place</div>
<div class="t" style="left:764px;top:337.5px;font-size:13px;line-height:19px;color:#606060;transform:scaleX(0.914);text-shadow:0.3px 0 0 #606060">Brooklyn, New York, 10461,</div>
<div class="t" style="left:764px;top:353.5px;font-size:13px;line-height:19px;color:#606060;transform:scaleX(0.914);text-shadow:0.3px 0 0 #606060">US</div>
<svg class="a" style="left:927px;top:367px" width="17" height="17" viewBox="0 0 24 24"><path d="M3 17.25V21h3.75L17.81 9.94l-3.75-3.75L3 17.25zM20.71 7.04c.39-.39.39-1.02 0-1.41l-2.34-2.34c-.39-.39-1.02-.39-1.41 0l-1.83 1.83 3.75 3.75 1.83-1.83z" fill="#015f96" /></svg>
<div class="a" style="left:966px;top:371px;width:22px;height:8px;background:#e6e6e6;border-radius:4px"></div>
<div class="a" style="left:964px;top:369px;width:12px;height:12px;background:#bdbdbd;border-radius:6px"></div>
<div class="t" style="left:998px;top:365.5px;font-size:13px;line-height:19px;color:#222;transform:scaleX(0.926);">Confirmation Required</div>
<div class="a b" style="left:1061px;top:405px;width:102px;height:25px;line-height:25px;font-size:13px;background:#015f96;color:#fff;"><span style="transform:scaleX(0.7994)">VIEW DETAILS</span></div>
<div class="a" style="left:759px;top:440px;width:393px;height:109px;background:#f5f5f5;border:1px solid #c9c9c9;box-sizing:border-box"></div>
<svg class="a" style="left:768px;top:488px" width="8" height="13"><path d="M1 1L6.500 6.500L1 12" stroke="#015f96" stroke-width="1.500" fill="none"/></svg>
<div class="t" style="left:789px;top:448px;font-size:12px;line-height:18px;color:#555;transform:scaleX(0.93);">Packaging</div>
<div class="t" style="left:932px;top:448px;font-size:12px;line-height:18px;color:#555;transform:scaleX(0.93);">Package type</div>
<div class="t" style="left:1075px;top:448px;font-size:12px;line-height:18px;color:#555;transform:scaleX(0.93);">Package Qty</div>
<div class="a" style="left:790px;top:468px;width:131px;height:23px;background:#fff;border-radius:3px"></div>
<div class="t" style="left:797px;top:469.5px;font-size:13px;line-height:19px;color:#444;text-shadow:0 0 0.3px #444">Box 2</div>
<div class="a" style="left:933px;top:468px;width:131px;height:23px;background:#fff;border-radius:3px"></div>
<div class="t" style="left:938px;top:469.5px;font-size:13px;line-height:19px;color:#a9a9a9;">Packaging</div>
<div class="a" style="left:1076px;top:468px;width:69px;height:23px;background:#fff;border-radius:3px"></div>
<div class="t" style="left:1082px;top:469.5px;font-size:13px;line-height:19px;color:#444;text-shadow:0 0 0.3px #444">1</div>
<div class="t" style="left:789px;top:495px;font-size:12px;line-height:18px;color:#555;transform:scaleX(0.93);">Weight</div>
<div class="t" style="left:932px;top:495px;font-size:12px;line-height:18px;color:#555;transform:scaleX(0.93);">Length</div>
<div class="t" style="left:1003px;top:495px;font-size:12px;line-height:18px;color:#555;transform:scaleX(0.93);">Width</div>
<div class="t" style="left:1075px;top:495px;font-size:12px;line-height:18px;color:#555;transform:scaleX(0.93);">Height</div>
<div class="a" style="left:790px;top:515px;width:59px;height:23px;background:#fff;border-radius:3px"></div>
<div class="t" style="left:797px;top:516.5px;font-size:13px;line-height:19px;color:#444;">1</div>
<div class="t" style="left:836px;top:516.5px;font-size:13px;line-height:19px;color:#555;">lb</div>
<div class="a" style="left:861px;top:515px;width:60px;height:23px;background:#fff;border-radius:3px"></div>
<div class="t" style="left:868px;top:516.5px;font-size:13px;line-height:19px;color:#444;">1</div>
<div class="t" style="left:906px;top:516.5px;font-size:13px;line-height:19px;color:#555;">oz</div>
<div class="a" style="left:933px;top:515px;width:59px;height:23px;background:#fff;border-radius:3px"></div>
<div class="t" style="left:938px;top:516.5px;font-size:13px;line-height:19px;color:#a9a9a9;">Length</div>
<div class="t" style="left:979px;top:516.5px;font-size:13px;line-height:19px;color:#555;">in</div>
<div class="a" style="left:1004px;top:515px;width:60px;height:23px;background:#fff;border-radius:3px"></div>
<div class="t" style="left:1009px;top:516.5px;font-size:13px;line-height:19px;color:#a9a9a9;">Width</div>
<div class="t" style="left:1051px;top:516.5px;font-size:13px;line-height:19px;color:#555;">in</div>
<div class="a" style="left:1076px;top:515px;width:69px;height:23px;background:#fff;border-radius:3px"></div>
<div class="t" style="left:1081px;top:516.5px;font-size:13px;line-height:19px;color:#a9a9a9;">Height</div>
<div class="t" style="left:1132px;top:516.5px;font-size:13px;line-height:19px;color:#555;">in</div>
<div class="t" style="left:1182px;top:219.5px;font-size:16px;line-height:22px;color:#222;transform:scaleX(0.9673);text-shadow:0.3px 0 0 #222">Prices</div>
<div class="t" style="left:1526px;top:219.5px;font-size:13px;line-height:19px;color:#555;">Sort by:</div>
<div class="a" style="left:1574px;top:217px;width:150px;height:25px;background:#f3f3f3;border-radius:3px"></div>
<div class="t" style="left:1579px;top:219.5px;font-size:13px;line-height:19px;color:#222;">Fastest</div>
<svg class="a" style="left:1707px;top:227px" width="9" height="6"><path d="M0 0H9L4.5 6z" fill="#b5b5b5"/></svg>
<div class="a" style="left:1182px;top:253px;width:542px;height:530px;border:1px solid #e2e2e2;box-sizing:border-box;background:#fff"></div>
<div class="a" style="left:1183px;top:334.5px;width:540px;height:24px;background:#ebf3f7"></div>
<div class="a" style="left:1183px;top:382.5px;width:540px;height:24px;background:#ebf3f7"></div>
<div class="a" style="left:1183px;top:430.5px;width:540px;height:24px;background:#ebf3f7"></div>
<div class="a" style="left:1183px;top:478.5px;width:540px;height:24px;background:#ebf3f7"></div>
<div class="a" style="left:1183px;top:526.5px;width:540px;height:24px;background:#ebf3f7"></div>
<div class="a" style="left:1183px;top:574.5px;width:540px;height:24px;background:#ebf3f7"></div>
<div class="a" style="left:1183px;top:622.5px;width:540px;height:24px;background:#ebf3f7"></div>
<div class="a" style="left:1183px;top:670.5px;width:540px;height:24px;background:#ebf3f7"></div>
<div class="a" style="left:1242px;top:254px;width:1px;height:442px;background:rgba(0,0,0,0.065)"></div>
<div class="a" style="left:1505px;top:254px;width:1px;height:442px;background:rgba(0,0,0,0.065)"></div>
<div class="a" style="left:1662px;top:254px;width:1px;height:442px;background:rgba(0,0,0,0.065)"></div>
<div class="a" style="left:1182px;top:285px;width:542px;height:1px;background:#015f96"></div>
<div class="a" style="left:1182px;top:310px;width:542px;height:1px;background:#015f96"></div>
<div class="t" style="left:1188px;top:259.5px;font-size:13px;line-height:19px;color:#222;">Carrier</div>
<div class="t" style="left:1248px;top:259.5px;font-size:13px;line-height:19px;color:#222;">Service</div>
<div class="t" style="left:1511px;top:259.5px;font-size:13px;line-height:19px;color:#222;">Days</div>
<div class="t" style="left:1668px;top:259.5px;font-size:13px;line-height:19px;color:#222;">Rate</div>
<div class="t" style="left:1188px;top:289px;font-size:13px;line-height:19px;color:#222;transform:scaleX(0.83);">USPS</div>
<div class="t clip" style="left:1250px;top:289px;width:289px;transform:scaleX(.877);font-size:13px;line-height:19px;color:#222">USPS Library Mail (Large Envelope or Flat)</div>
<div class="t clip" style="left:1513px;top:289px;width:164px;font-size:13px;line-height:19px;color:#222">-737983 (Monday, 12:00 AM)</div>
<div class="t" style="left:1670px;top:289px;font-size:13px;line-height:19px;color:#222;">$3.28</div>
<div class="t" style="left:1188px;top:314px;font-size:13px;line-height:19px;color:#222;transform:scaleX(0.83);">USPS</div>
<div class="t clip" style="left:1250px;top:314px;width:289px;transform:scaleX(.877);font-size:13px;line-height:19px;color:#222">USPS Priority Mail Express (Letter)</div>
<div class="t clip" style="left:1513px;top:314px;width:164px;font-size:13px;line-height:19px;color:#222">-737983 (Monday, 12:00 AM)</div>
<div class="t" style="left:1670px;top:314px;font-size:13px;line-height:19px;color:#222;">$23.25</div>
<div class="t" style="left:1188px;top:338px;font-size:13px;line-height:19px;color:#222;transform:scaleX(0.83);">USPS</div>
<div class="t clip" style="left:1250px;top:338px;width:289px;transform:scaleX(.877);font-size:13px;line-height:19px;color:#222">USPS Priority Mail Express (Flat Rate Envelope)</div>
<div class="t clip" style="left:1513px;top:338px;width:164px;font-size:13px;line-height:19px;color:#222">-737983 (Monday, 12:00 AM)</div>
<div class="t" style="left:1670px;top:338px;font-size:13px;line-height:19px;color:#222;">$22.75</div>
<div class="t" style="left:1188px;top:362px;font-size:13px;line-height:19px;color:#222;transform:scaleX(0.83);">USPS</div>
<div class="t clip" style="left:1250px;top:362px;width:289px;transform:scaleX(.877);font-size:13px;line-height:19px;color:#222">USPS Priority Mail Express (Legal Flat Rate Envelope)</div>
<div class="t clip" style="left:1513px;top:362px;width:164px;font-size:13px;line-height:19px;color:#222">-737983 (Monday, 12:00 AM)</div>
<div class="t" style="left:1670px;top:362px;font-size:13px;line-height:19px;color:#222;">$22.95</div>
<div class="t" style="left:1188px;top:386px;font-size:13px;line-height:19px;color:#222;transform:scaleX(0.83);">USPS</div>
<div class="t clip" style="left:1250px;top:386px;width:289px;transform:scaleX(.877);font-size:13px;line-height:19px;color:#222">USPS Priority Mail (Letter)</div>
<div class="t clip" style="left:1513px;top:386px;width:164px;font-size:13px;line-height:19px;color:#222">1 (Wednesday, 12:00 AM)</div>
<div class="t" style="left:1670px;top:386px;font-size:13px;line-height:19px;color:#222;">$7.79</div>
<div class="t" style="left:1188px;top:410px;font-size:13px;line-height:19px;color:#222;transform:scaleX(0.83);">USPS</div>
<div class="t clip" style="left:1250px;top:410px;width:289px;transform:scaleX(.877);font-size:13px;line-height:19px;color:#222">USPS Priority Mail (Flat Rate Box)</div>
<div class="t clip" style="left:1513px;top:410px;width:164px;font-size:13px;line-height:19px;color:#222">1 (Wednesday, 12:00 AM)</div>
<div class="t" style="left:1670px;top:410px;font-size:13px;line-height:19px;color:#222;">$13.75</div>
<div class="t" style="left:1188px;top:434px;font-size:13px;line-height:19px;color:#222;transform:scaleX(0.83);">USPS</div>
<div class="t clip" style="left:1250px;top:434px;width:289px;transform:scaleX(.877);font-size:13px;line-height:19px;color:#222">USPS Priority Mail (Small Flat Rate Box)</div>
<div class="t clip" style="left:1513px;top:434px;width:164px;font-size:13px;line-height:19px;color:#222">1 (Wednesday, 12:00 AM)</div>
<div class="t" style="left:1670px;top:434px;font-size:13px;line-height:19px;color:#222;">$7.90</div>
<div class="t" style="left:1188px;top:458px;font-size:13px;line-height:19px;color:#222;transform:scaleX(0.83);">USPS</div>
<div class="t clip" style="left:1250px;top:458px;width:289px;transform:scaleX(.877);font-size:13px;line-height:19px;color:#222">USPS Priority Mail (Large Flat Rate Box)</div>
<div class="t clip" style="left:1513px;top:458px;width:164px;font-size:13px;line-height:19px;color:#222">1 (Wednesday, 12:00 AM)</div>
<div class="t" style="left:1670px;top:458px;font-size:13px;line-height:19px;color:#222;">$19.30</div>
<div class="t" style="left:1188px;top:482px;font-size:13px;line-height:19px;color:#222;transform:scaleX(0.83);">USPS</div>
<div class="t clip" style="left:1250px;top:482px;width:289px;transform:scaleX(.877);font-size:13px;line-height:19px;color:#222">USPS Priority Mail (Flat Rate Envelope)</div>
<div class="t clip" style="left:1513px;top:482px;width:164px;font-size:13px;line-height:19px;color:#222">1 (Wednesday, 12:00 AM)</div>
<div class="t" style="left:1670px;top:482px;font-size:13px;line-height:19px;color:#222;">$7.40</div>
<div class="t" style="left:1188px;top:506px;font-size:13px;line-height:19px;color:#222;transform:scaleX(0.83);">USPS</div>
<div class="t clip" style="left:1250px;top:506px;width:289px;transform:scaleX(.877);font-size:13px;line-height:19px;color:#222">USPS Priority Mail (Flat Rate Padded Envelope)</div>
<div class="t clip" style="left:1513px;top:506px;width:164px;font-size:13px;line-height:19px;color:#222">1 (Wednesday, 12:00 AM)</div>
<div class="t" style="left:1670px;top:506px;font-size:13px;line-height:19px;color:#222;">$8.00</div>
<div class="t" style="left:1188px;top:530px;font-size:13px;line-height:19px;color:#222;transform:scaleX(0.83);">USPS</div>
<div class="t clip" style="left:1250px;top:530px;width:289px;transform:scaleX(.877);font-size:13px;line-height:19px;color:#222">USPS Priority Mail (Regional Rate Box A)</div>
<div class="t clip" style="left:1513px;top:530px;width:164px;font-size:13px;line-height:19px;color:#222">1 (Wednesday, 12:00 AM)</div>
<div class="t" style="left:1670px;top:530px;font-size:13px;line-height:19px;color:#222;">$7.83</div>
<div class="t" style="left:1188px;top:554px;font-size:13px;line-height:19px;color:#222;transform:scaleX(0.83);">USPS</div>
<div class="t clip" style="left:1250px;top:554px;width:289px;transform:scaleX(.877);font-size:13px;line-height:19px;color:#222">USPS Priority Mail (Regional Rate Box B)</div>
<div class="t clip" style="left:1513px;top:554px;width:164px;font-size:13px;line-height:19px;color:#222">1 (Wednesday, 12:00 AM)</div>
<div class="t" style="left:1670px;top:554px;font-size:13px;line-height:19px;color:#222;">$8.23</div>
<div class="t" style="left:1188px;top:578px;font-size:13px;line-height:19px;color:#222;transform:scaleX(0.83);">USPS</div>
<div class="t clip" style="left:1250px;top:578px;width:289px;transform:scaleX(.877);font-size:13px;line-height:19px;color:#222">USPS Priority Mail (Legal Flat Rate Envelope)</div>
<div class="t clip" style="left:1513px;top:578px;width:164px;font-size:13px;line-height:19px;color:#222">1 (Wednesday, 12:00 AM)</div>
<div class="t" style="left:1670px;top:578px;font-size:13px;line-height:19px;color:#222;">$7.70</div>
<div class="t" style="left:1188px;top:602px;font-size:13px;line-height:19px;color:#222;transform:scaleX(0.83);">USPS</div>
<div class="t clip" style="left:1250px;top:602px;width:289px;transform:scaleX(.877);font-size:13px;line-height:19px;color:#222">USPS First-Class Mail (Postcard)</div>
<div class="t clip" style="left:1513px;top:602px;width:164px;font-size:13px;line-height:19px;color:#222">2 (Thursday, 12:00 AM)</div>
<div class="t" style="left:1670px;top:602px;font-size:13px;line-height:19px;color:#222;">$0.36</div>
<div class="t" style="left:1188px;top:626px;font-size:13px;line-height:19px;color:#222;transform:scaleX(0.83);">USPS</div>
<div class="t clip" style="left:1250px;top:626px;width:289px;transform:scaleX(.877);font-size:13px;line-height:19px;color:#222">USPS Media Mail (Large Envelope or Flat)</div>
<div class="t clip" style="left:1513px;top:626px;width:164px;font-size:13px;line-height:19px;color:#222">3 (Friday, 12:00 AM)</div>
<div class="t" style="left:1670px;top:626px;font-size:13px;line-height:19px;color:#222;">$3.45</div>
<div class="t" style="left:1188px;top:650px;font-size:13px;line-height:19px;color:#222;transform:scaleX(0.83);">USPS</div>
<div class="t clip" style="left:1250px;top:650px;width:289px;transform:scaleX(.877);font-size:13px;line-height:19px;color:#222">USPS Parcel Select Ground (Thick Envelope)</div>
<div class="t clip" style="left:1513px;top:650px;width:164px;font-size:13px;line-height:19px;color:#222">3 (Friday, 12:00 AM)</div>
<div class="t" style="left:1670px;top:650px;font-size:13px;line-height:19px;color:#222;">$7.59</div>
<div class="t" style="left:1188px;top:674px;font-size:13px;line-height:19px;color:#222;transform:scaleX(0.83);">USPS</div>
<div class="t clip" style="left:1250px;top:674px;width:289px;transform:scaleX(.877);font-size:13px;line-height:19px;color:#222">USPS Parcel Select Ground (Oversized Package)</div>
<div class="t clip" style="left:1513px;top:674px;width:164px;font-size:13px;line-height:19px;color:#222">3 (Friday, 12:00 AM)</div>
<div class="t" style="left:1670px;top:674px;font-size:13px;line-height:19px;color:#222;">$80.00</div>
<div class="t" style="left:196px;top:801.5px;font-size:13px;line-height:19px;color:#222;font-weight:700;">Pick Settings</div>
<div class="a" style="left:196px;top:825.0px;width:11px;height:11px;border:1px solid #015f96;border-radius:7px;background:#fff"></div>
<div class="a" style="left:199px;top:828.0px;width:7px;height:7px;background:#015f96;border-radius:4px"></div>
<div class="t" style="left:213px;top:821.5px;font-size:13px;line-height:19px;color:#222;">Create one Pick Order</div>
<div class="a" style="left:196px;top:845.0px;width:11px;height:11px;border:1px solid #015f96;border-radius:7px;background:#fff"></div>
<div class="t" style="left:213px;top:841.5px;font-size:13px;line-height:19px;color:#222;">Create Pick order for each Ship Order</div>
<div class="t" style="left:438px;top:801.5px;font-size:13px;line-height:19px;color:#222;font-weight:700;">Print Settings</div>
<div class="a" style="left:440px;top:828px;width:22px;height:8px;background:#e6e6e6;border-radius:4px"></div>
<div class="a" style="left:438px;top:826px;width:12px;height:12px;background:#bdbdbd;border-radius:6px"></div>
<div class="t" style="left:472px;top:821.5px;font-size:13px;line-height:19px;color:#222;">Print Pick List</div>
<div class="a" style="left:440px;top:848px;width:22px;height:8px;background:#c5d4fb;border-radius:4px"></div>
<div class="a" style="left:452px;top:846px;width:12px;height:12px;background:#015f96;border-radius:6px"></div>
<div class="t" style="left:472px;top:841.5px;font-size:13px;line-height:19px;color:#222;">Show Pick Order before Print</div>
<div class="t" style="left:654px;top:801.5px;font-size:13px;line-height:19px;color:#222;font-weight:700;">Send&nbsp; Tracking #</div>
<div class="a" style="left:654px;top:825.0px;width:11px;height:11px;border:1px solid #015f96;border-radius:7px;background:#fff"></div>
<div class="a" style="left:657px;top:828.0px;width:7px;height:7px;background:#015f96;border-radius:4px"></div>
<div class="t" style="left:671px;top:821.5px;font-size:13px;line-height:19px;color:#222;">Before approve Pick Order</div>
<div class="a" style="left:654px;top:845.0px;width:11px;height:11px;border:1px solid #015f96;border-radius:7px;background:#fff"></div>
<div class="t" style="left:671px;top:841.5px;font-size:13px;line-height:19px;color:#222;">After approve Pick Order</div>
<div class="a b" style="left:1433px;top:834px;width:75px;height:25px;line-height:25px;font-size:13px;background:#eeeeee;color:#015f96;"><span style="transform:scaleX(0.8417)">CANCEL</span></div>
<div class="a b" style="left:1518px;top:834px;width:73px;height:25px;line-height:25px;font-size:13px;background:#015f96;color:#fff;"><span style="transform:scaleX(0.7711)">SAVE</span></div>
<div class="a b" style="left:1603px;top:834px;width:121px;height:25px;line-height:25px;font-size:13px;background:#015f96;color:#fff;"><span style="transform:scaleX(0.7894)">GENERATE LABEL</span></div>
<div class="a" style="left:185px;top:170px;width:1px;height:700px;background:#1a1a1a"></div>
<div class="a" style="left:1734px;top:170px;width:1px;height:700px;background:#1a1a1a"></div>
<div class="a" style="left:185px;top:869px;width:1550px;height:1px;background:#1a1a1a"></div>
<div class="a" style="left:1591px;top:797px;width:147px;height:87px;border:4px solid #8fafc2;box-shadow:3px 3px 2px rgba(0,0,0,0.7), inset 3px 3px 2px rgba(0,0,0,0.7)"></div>
</div></body></html>
